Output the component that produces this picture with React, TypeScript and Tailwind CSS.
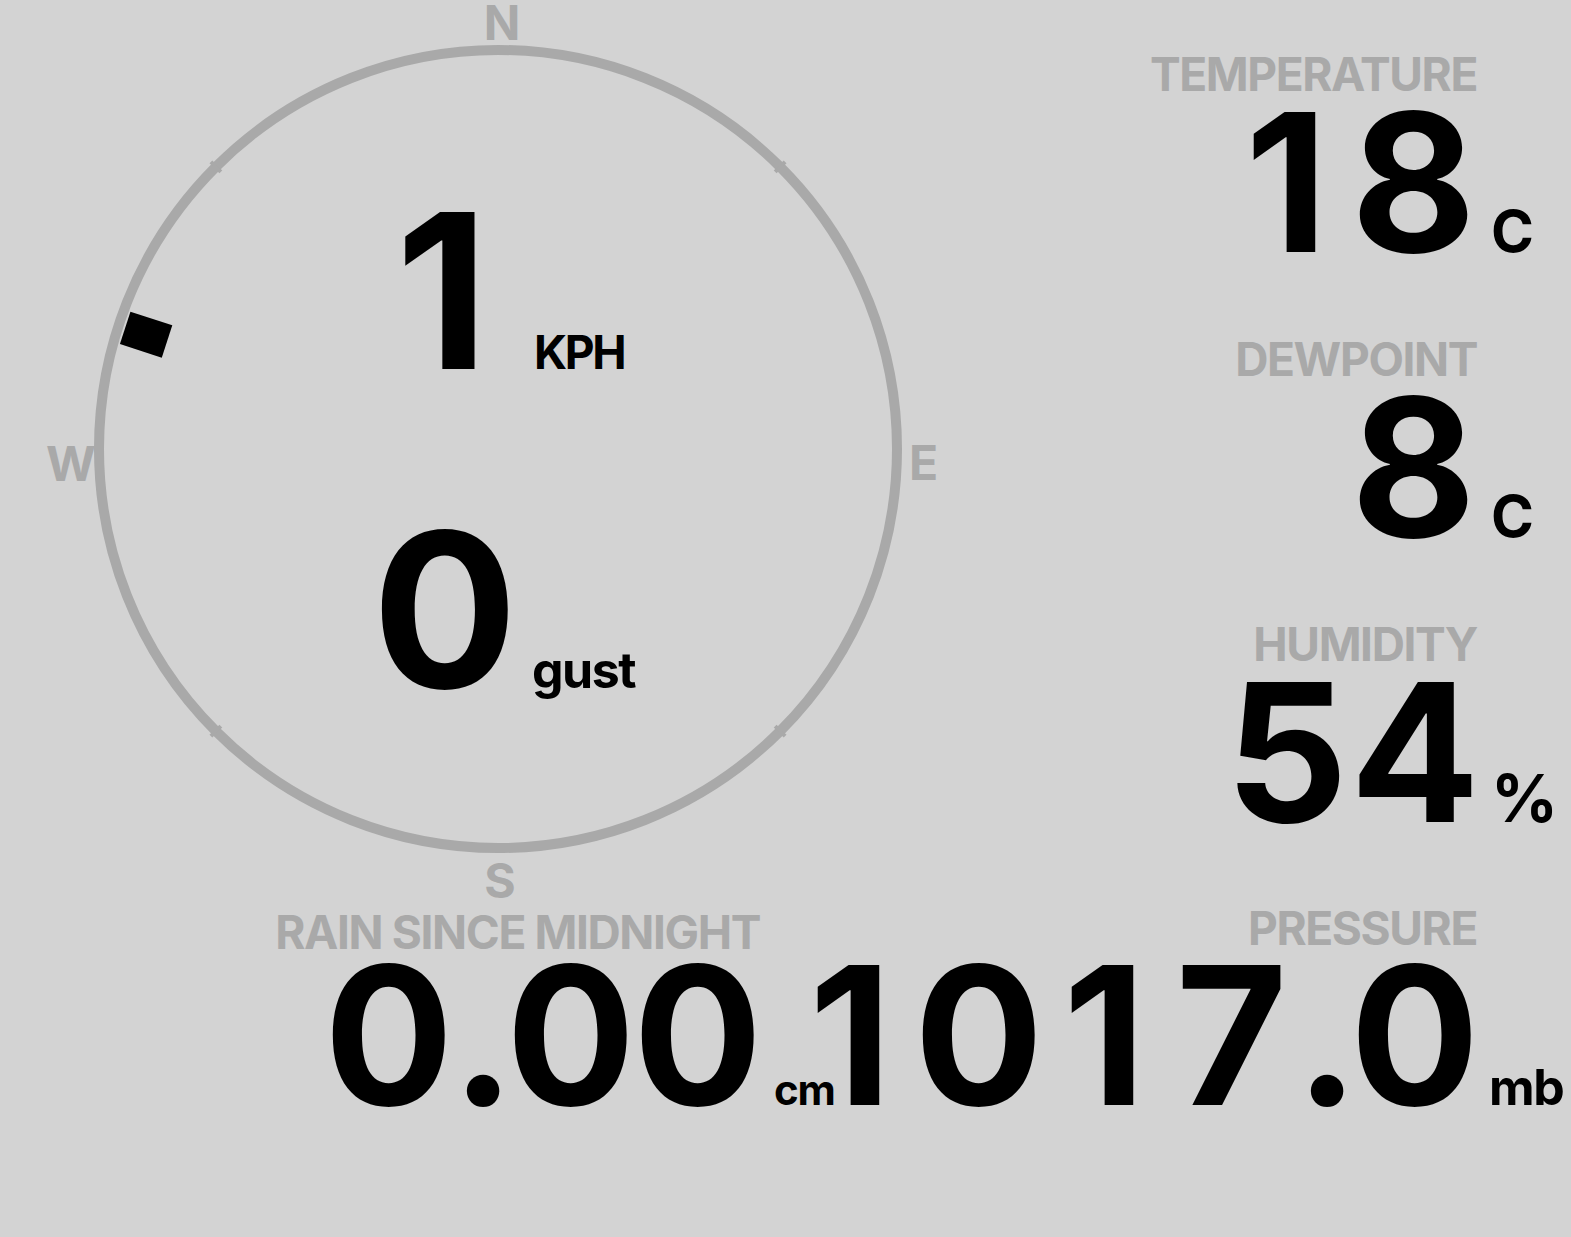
import React from 'react';

const RING = '#a9a9a9';

// fixed-width figures, like a tabular display
function Figures({ value }: { value: string }) {
  return (
    <span className="whitespace-nowrap">
      {value.split('').map((ch, i) =>
        ch === '.' ? (
          <span key={i} className="inline-block w-[55px] text-center">.</span>
        ) : (
          <span key={i} className="inline-block w-[127px] text-center">{ch}</span>
        )
      )}
    </span>
  );
}

interface StatProps {
  label: string;
  value: string;
  unit: string;
  unitClass: string;
  valueClass: string;
  labelClass?: string;
}

function Stat({ label, value, unit, unitClass, valueClass, labelClass = '' }: StatProps) {
  return (
    <div className="flex flex-col items-end">
      <div className={`text-[46px] leading-none tracking-[-0.03em] text-[#a9a9a9] whitespace-nowrap ${labelClass}`}>
        {label}
      </div>
      <div className={`flex items-baseline ${valueClass}`}>
        <span className="text-[192px] leading-none text-black">
          <Figures value={value} />
        </span>
        <span className={`w-0 whitespace-nowrap text-black leading-none tracking-[-0.03em] ${unitClass}`}>{unit}</span>
      </div>
    </div>
  );
}

function Compass({ bearing }: { bearing: number }) {
  const cx = 498;
  const cy = 449;
  const r = 399;
  return (
    <div className="relative w-[1000px] h-[905px] shrink-0">
      <svg className="absolute inset-0 overflow-visible" width="1000" height="905" viewBox="0 0 1000 905">
        <circle cx={cx} cy={cy} r={r} fill="none" stroke={RING} strokeWidth="10" />
        {[45, 135, 225, 315].map((a) => (
          <rect
            key={a}
            x={cx - 2}
            y={cy - r - 7}
            width="4"
            height="14"
            fill={RING}
            transform={`rotate(${a} ${cx} ${cy})`}
          />
        ))}
        <rect
          x={cx - 17}
          y={cy - 370 - 22}
          width="34"
          height="44"
          fill="#000"
          transform={`rotate(${bearing} ${cx} ${cy})`}
        />
        <g fill={RING} fontFamily="Inter, sans-serif" fontWeight="700" fontSize="48">
          <text x="502" y="40" textAnchor="middle">N</text>
          <text x="500" y="898" textAnchor="middle">S</text>
          <text x="909" y="480">E</text>
          <text x="70" y="481" textAnchor="middle" letterSpacing="-2">W</text>
        </g>
      </svg>
      <div className="relative flex flex-col items-start pl-[372px] pt-[183px] gap-[103px]">
        <div className="flex items-baseline">
          <span className="w-[140px] text-center text-[216px] leading-none">1</span>
          <span className="ml-[22px] text-[46px] leading-none tracking-[-0.05em]">KPH</span>
        </div>
        <div className="flex items-baseline">
          <span className="w-[140px] text-center text-[216px] leading-none">0</span>
          <span className="ml-[20px] text-[50px] leading-none tracking-[-0.03em]">gust</span>
        </div>
      </div>
    </div>
  );
}

export default function App() {
  return (
    <div className="min-h-screen h-[1237px] overflow-hidden bg-[#d3d3d3] font-[Inter,'Liberation_Sans',sans-serif] font-bold text-black">
      <div className="flex">
        <Compass bearing={-72} />
        <div className="flex-1 flex flex-col items-end pt-[51px] gap-[58px] pr-[94px]">
          <Stat label="TEMPERATURE" value="18" unit="C" valueClass="mt-[-11px]" unitClass="ml-[14px] mr-[-14px] text-[58px]" />
          <Stat label="DEWPOINT" value="8" unit="C" valueClass="mt-[-11px]" unitClass="ml-[14px] mr-[-14px] text-[58px]" />
          <Stat label="HUMIDITY" value="54" unit="%" valueClass="mt-[-11px]" unitClass="ml-[14px] mr-[-14px] text-[66px]" />
        </div>
      </div>
      <div className="flex">
        <div className="w-[760px] flex justify-end">
          <Stat
            label="RAIN SINCE MIDNIGHT"
            value="0.00"
            unit="cm"
            labelClass="mt-[4px]"
            valueClass="mt-[-16px]"
            unitClass="ml-[14px] mr-[-14px] text-[42px]"
          />
        </div>
        <div className="ml-auto pr-[94px]">
          <Stat label="PRESSURE" value="1017.0" unit="mb" valueClass="mt-[-12px]" unitClass="ml-[12px] mr-[-12px] text-[50px]" />
        </div>
      </div>
    </div>
  );
}
